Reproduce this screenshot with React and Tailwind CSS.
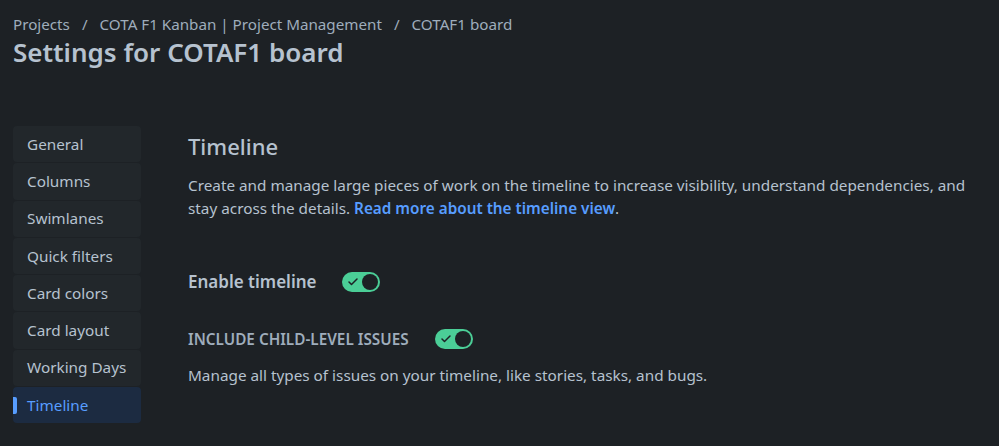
import { Check } from 'lucide-react';

const navItems = ['General', 'Columns', 'Swimlanes', 'Quick filters', 'Card colors', 'Card layout', 'Working Days', 'Timeline'];

function Toggle() {
  return (
    <span className="inline-flex items-center w-[38px] h-[20px] rounded-full bg-[#4bce97] px-[2px]">
      <span className="flex-1 flex justify-center">
        <Check size={12} strokeWidth={3} className="text-[#1d2125]" />
      </span>
      <span className="w-[16px] h-[16px] rounded-full bg-[#1d2125]" />
    </span>
  );
}

export default function App() {
  return (
    <div className="w-[999px] h-[446px] overflow-hidden bg-[#1d2125] text-[#b6c2cf] font-['Noto_Sans',sans-serif]">
      {/* Header */}
      <div className="pl-[13px] pt-[13px]">
        <div className="flex items-center gap-[12px] text-[15.2px] leading-[22px] text-[#9fadbc]">
          <span>Projects</span>
          <span>/</span>
          <span>COTA F1 Kanban | Project Management</span>
          <span>/</span>
          <span>COTAF1 board</span>
        </div>
        <h1 className="text-[26px] leading-[36px] font-semibold text-[#b6c2cf] -mt-[1px]">Settings for COTAF1 board</h1>
      </div>

      <div className="flex mt-[56px] pl-[13px]">
        {/* Sidebar */}
        <nav className="w-[128px] flex flex-col gap-[1px] shrink-0">
          {navItems.map((item) => {
            const active = item === 'Timeline';
            return (
              <div
                key={item}
                className={`relative h-[36.3px] flex items-center pl-[14px] rounded-[4px] text-[15.3px] ${active ? 'bg-[#1c2b41] text-[#579dff]' : 'bg-[#22272b] text-[#b6c2cf]'}`}
              >
                {active && <span className="absolute left-0 top-[10px] h-[17px] w-[4px] rounded-r-[2px] bg-[#579dff]" />}
                {item}
              </div>
            );
          })}
        </nav>

        {/* Content */}
        <main className="pl-[47px] pr-[16px] flex-1">
          <h2 className="text-[22px] leading-[28px] font-medium text-[#b6c2cf] mt-[6px]">Timeline</h2>
          <p className="text-[15.3px] leading-[23px] mt-[14px] text-[#b6c2cf]">
            Create and manage large pieces of work on the timeline to increase visibility, understand dependencies, and stay across the details.{' '}
            <span className="text-[#579dff] font-semibold">Read more about the timeline view</span>.
          </p>

          <div className="flex items-center gap-[25px] mt-[49px]">
            <span className="text-[17px] font-semibold text-[#b6c2cf]">Enable timeline</span>
            <Toggle />
          </div>

          <div className="flex items-center gap-[26px] mt-[33px]">
            <span className="text-[15.3px] font-semibold uppercase text-[#9fadbc]">Include child-level issues</span>
            <Toggle />
          </div>

          <p className="text-[15.3px] leading-[23px] mt-[14px] text-[#b6c2cf]">
            Manage all types of issues on your timeline, like stories, tasks, and bugs.
          </p>
        </main>
      </div>
    </div>
  );
}
